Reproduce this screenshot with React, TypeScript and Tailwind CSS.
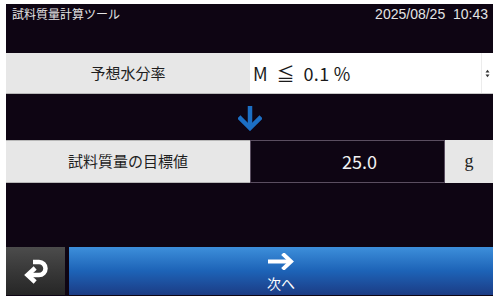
import React from "react";

const JP = { fontFamily: '"Noto Sans CJK JP", "Noto Sans", sans-serif' };

export default function App() {
  return (
    <div className="w-[500px] h-[300px] bg-white pl-[6px] pt-[4px] pr-[7px] pb-[4px]" style={JP}>
      <div className="w-full h-full bg-[#0e0513] flex flex-col">
        {/* header */}
        <div className="h-[49px] flex justify-between items-start pl-[6px] pr-[5px] text-[#e4e4e4]">
          <span className="text-[12px] leading-[14px] mt-[3px]">試料質量計算ツール</span>
          <span className="text-[14px] leading-[14px] mt-[3px] whitespace-pre" style={{ fontFamily: '"Liberation Sans", Arial, sans-serif' }}>2025/08/25  10:43</span>
        </div>
        {/* row 1 */}
        <div className="h-[41px] flex">
          <div className="w-[244px] bg-[#e7e7e7] border-b border-[#b8b8b8] flex items-center justify-center text-[15px] text-[#1e1e1e]">
            予想水分率
          </div>
          <div className="flex-1 bg-white border-b border-[#c8c8c8] flex items-center">
            <span className="pl-[3px] text-[18px] text-[#1a1a1a] whitespace-pre flex-1 tracking-[0.3px]">M  ≦  0.1 %</span>
            <div className="w-[12px] h-full border-l border-[#ececec] flex items-center justify-center">
              <svg width="5" height="9" viewBox="0 0 5 9">
                <path d="M0.5 3.5 L2.5 0.8 L4.5 3.5 Z" fill="#333" />
                <path d="M0.5 5.5 L2.5 8.2 L4.5 5.5 Z" fill="#333" />
              </svg>
            </div>
          </div>
        </div>
        {/* arrow */}
        <div className="h-[46px] flex justify-center items-start pt-[11px]">
          <svg width="24" height="26" viewBox="0 0 24 26">
            <path d="M12 1 V23" stroke="#1c6fc4" strokeWidth="4.5" fill="none" />
            <path d="M2.5 13.5 L12 23 L21.5 13.5" stroke="#1c6fc4" strokeWidth="4.5" fill="none" strokeLinecap="square" />
          </svg>
        </div>
        {/* row 2 */}
        <div className="h-[43px] flex">
          <div className="w-[244px] bg-[#e7e7e7] border-t border-b border-[#b8b8b8] flex items-center justify-center text-[15px] text-[#1e1e1e]">
            試料質量の目標値
          </div>
          <div className="w-[195px] bg-[#0e0513] border border-[#5a4e60] flex items-center pl-[91px] text-[18px] text-[#f2f2f2]">
            25.0
          </div>
          <div className="flex-1 bg-[#e7e7e7] flex items-center justify-center text-[18px] text-[#222]" style={{ fontFamily: '"Liberation Serif", "Times New Roman", serif' }}>
            g
          </div>
        </div>
        <div className="flex-1" />
        {/* bottom */}
        <div className="h-[48px] flex gap-[4px] mb-[1px]">
          <div className="w-[59px] bg-gradient-to-b from-[#4c4c4c] via-[#383838] to-[#262626] flex items-center justify-center">
            <svg width="28" height="28" viewBox="0 0 28 28">
              <path d="M11 5 H17 A6.5 6.5 0 0 1 17 18 H7" stroke="#fff" strokeWidth="4.5" fill="none" />
              <path d="M11.5 12.5 L5.5 18 L11.5 23.5" stroke="#fff" strokeWidth="4.5" fill="none" strokeLinecap="square" />
            </svg>
          </div>
          <div className="flex-1 bg-gradient-to-b from-[#3d8fdb] via-[#1d63b7] to-[#1b3c85] flex flex-col items-center justify-center">
            <svg width="28" height="17" viewBox="0 0 28 17" className="mt-[2px]">
              <path d="M1 8.5 H24" stroke="#fff" strokeWidth="4" fill="none" />
              <path d="M17 2 L24 8.5 L17 15" stroke="#fff" strokeWidth="4" fill="none" strokeLinecap="square" />
            </svg>
            <span className="text-[14px] leading-[15px] text-white mt-[6px]">次へ</span>
          </div>
        </div>
      </div>
    </div>
  );
}
